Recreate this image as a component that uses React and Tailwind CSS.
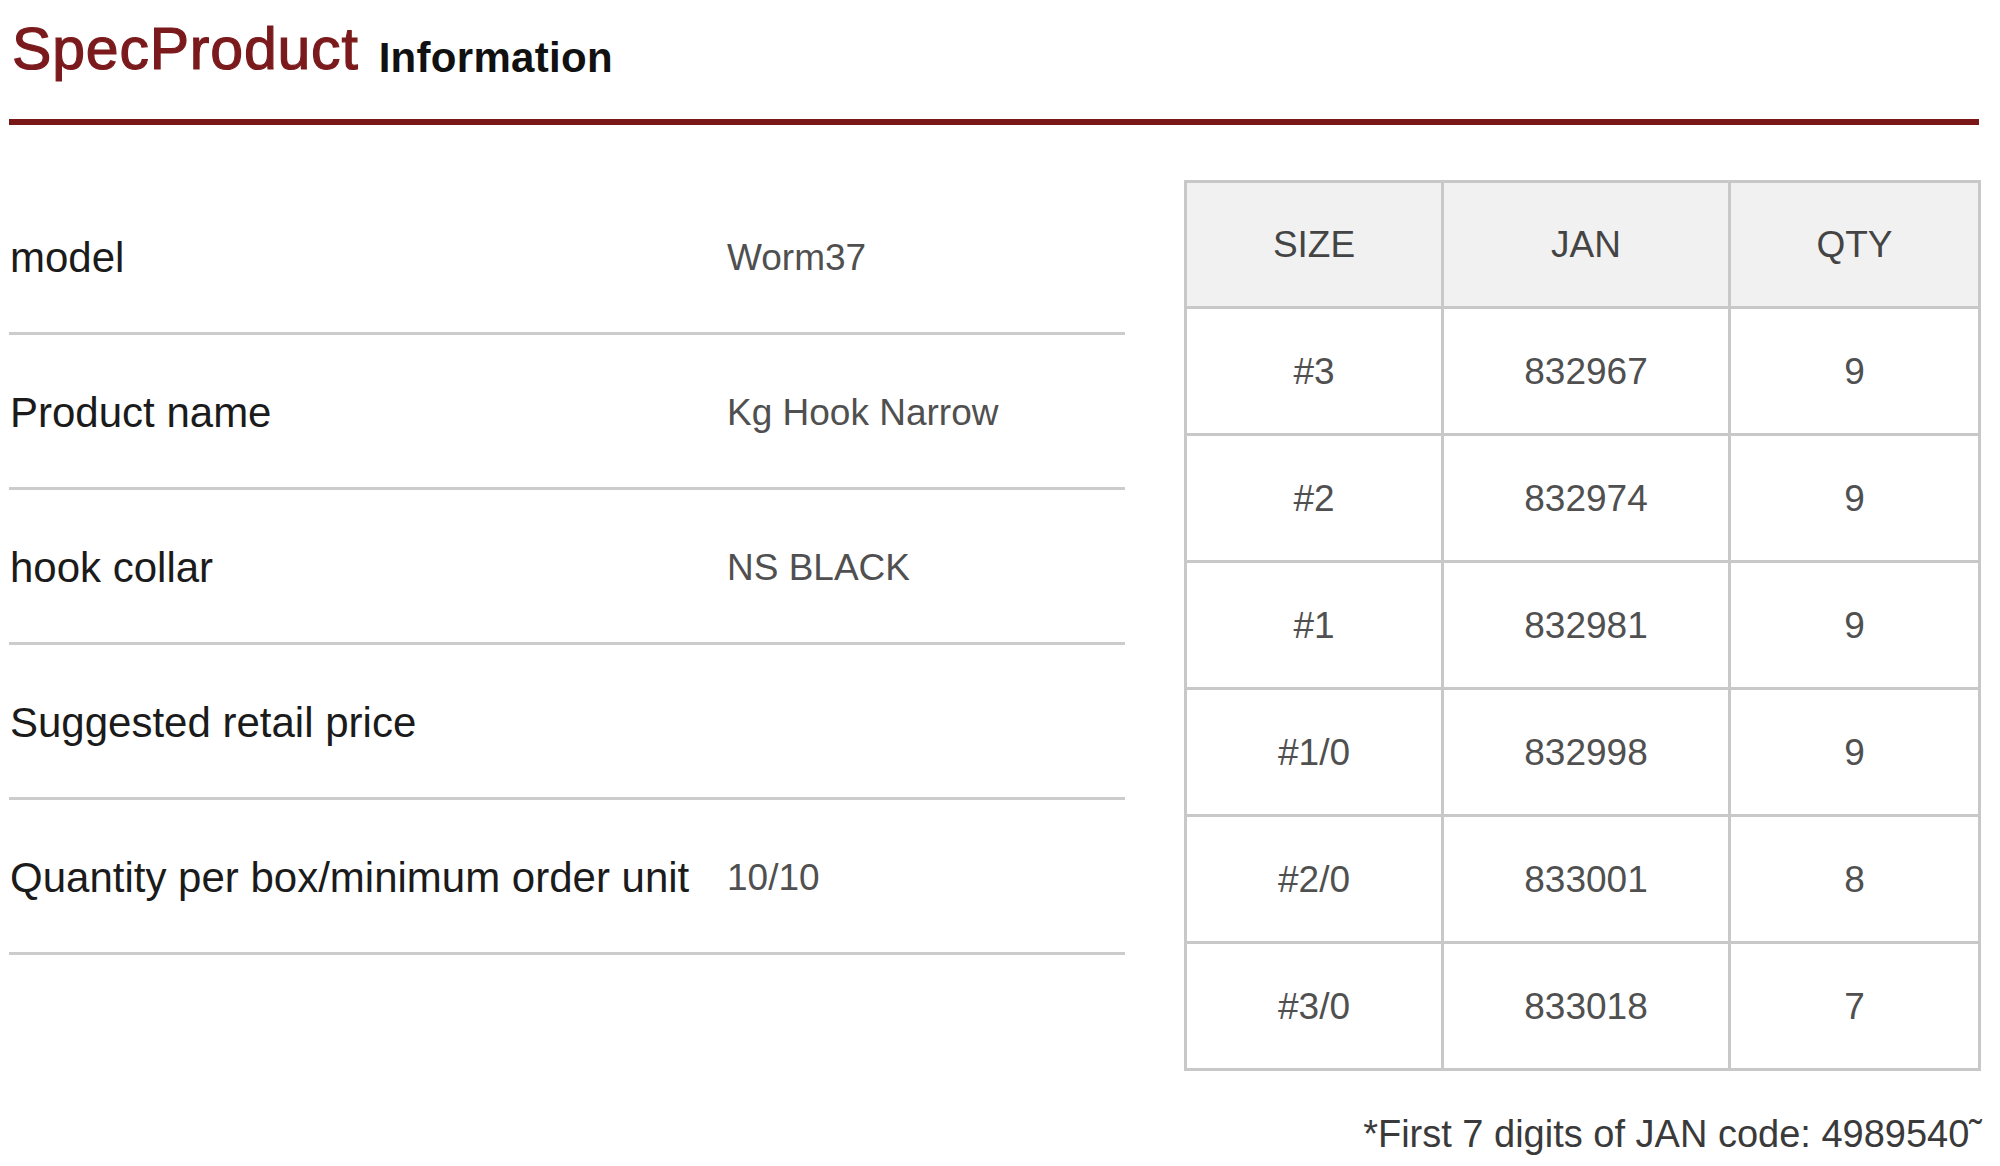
import React from "react";

const specs = [
  { label: "model", value: "Worm37" },
  { label: "Product name", value: "Kg Hook Narrow" },
  { label: "hook collar", value: "NS BLACK" },
  { label: "Suggested retail price", value: "" },
  { label: "Quantity per box/minimum order unit", value: "10/10" },
];

const sizes = [
  { size: "#3", jan: "832967", qty: "9" },
  { size: "#2", jan: "832974", qty: "9" },
  { size: "#1", jan: "832981", qty: "9" },
  { size: "#1/0", jan: "832998", qty: "9" },
  { size: "#2/0", jan: "833001", qty: "8" },
  { size: "#3/0", jan: "833018", qty: "7" },
];

const App = () => {
  return (
    <div className="w-[2000px] h-[1166px] bg-white overflow-hidden font-['Liberation_Sans',Arial,sans-serif]">
      {/* heading */}
      <div className="ml-[9px] mr-[21px] h-[125px] border-b-[6px] border-[#7a1818] flex items-end pb-[40px]">
        <h1 className="text-[59px] leading-none text-[#7b1a1c] pl-[3px] tracking-[0.8px] [-webkit-text-stroke:1.2px_#7b1a1c]">SpecProduct</h1>
        <span className="ml-[20px] text-[42px] leading-none font-bold text-[#111] tracking-[0.3px]">Information</span>
      </div>

      <div className="flex mt-[55px] ml-[9px]">
        {/* spec list */}
        <div className="w-[1116px]">
          {specs.map((row) => (
            <div key={row.label} className="h-[155px] border-b-[3px] border-[#cccccc] flex items-center">
              <div className="w-[718px] pl-[1px] pt-[3px] text-[42px] text-[#1b1b1b]">{row.label}</div>
              <div className="pt-[3px] text-[37px] text-[#505050]">{row.value}</div>
            </div>
          ))}
        </div>

        {/* size table */}
        <div className="ml-[59px]">
          <table className="border-collapse border-[3px] border-[#c8c8c8] text-[37px] text-[#505050]">
            <thead>
              <tr className="h-[126px] bg-[#f1f1f1] text-[#444]">
                <th className="w-[257px] border-[3px] border-[#c8c8c8] font-normal">SIZE</th>
                <th className="w-[287px] border-[3px] border-[#c8c8c8] font-normal">JAN</th>
                <th className="w-[250px] border-[3px] border-[#c8c8c8] font-normal">QTY</th>
              </tr>
            </thead>
            <tbody>
              {sizes.map((r) => (
                <tr key={r.size} className="h-[127px] text-center">
                  <td className="border-[3px] border-[#c8c8c8] pt-[2px]">{r.size}</td>
                  <td className="border-[3px] border-[#c8c8c8] pt-[2px]">{r.jan}</td>
                  <td className="border-[3px] border-[#c8c8c8] pt-[2px]">{r.qty}</td>
                </tr>
              ))}
            </tbody>
          </table>
        </div>
      </div>

      <p className="mt-[44px] mr-[18px] text-right text-[38px] text-[#3a3a3a] leading-none">
        *First 7 digits of JAN code: 4989540˜
      </p>
    </div>
  );
};

export default App;
